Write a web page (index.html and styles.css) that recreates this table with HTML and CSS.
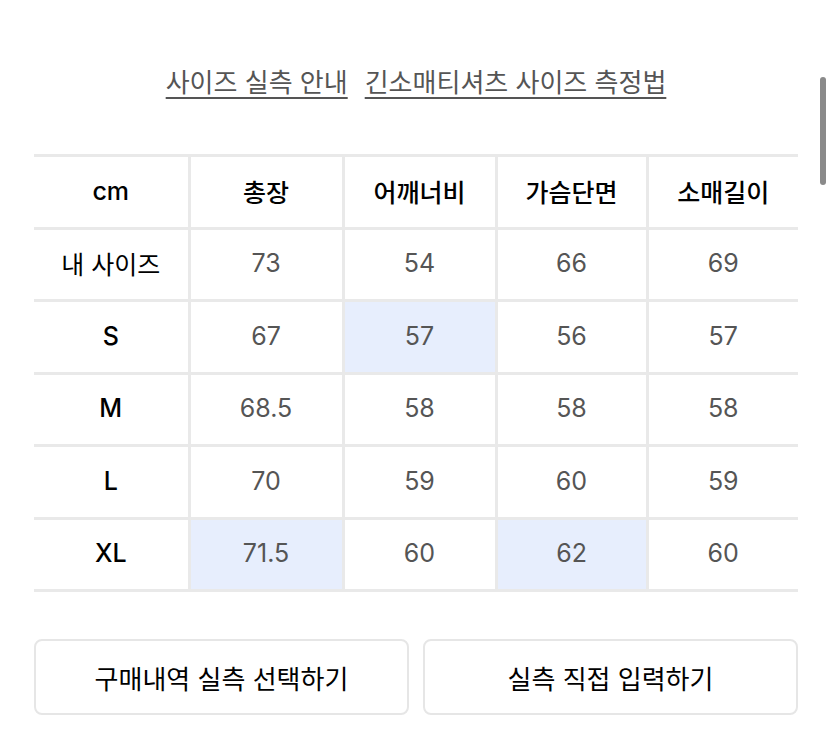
FILE: index.html
```html
<!DOCTYPE html>
<html lang="ko">
<head>
<meta charset="utf-8">
<link rel="stylesheet" href="styles.css">
</head>
<body>
<div class="page">
  <div class="links">
    <a class="link" href="#">사이즈 실측 안내</a>
    <a class="link" href="#">긴소매티셔츠 사이즈 측정법</a>
  </div>
  <table class="size-table">
    <colgroup>
      <col class="c1"><col class="c2"><col class="c3"><col class="c4"><col class="c5">
    </colgroup>
    <thead>
      <tr>
        <th>cm</th><th>총장</th><th>어깨너비</th><th>가슴단면</th><th>소매길이</th>
      </tr>
    </thead>
    <tbody>
      <tr><th>내 사이즈</th><td>73</td><td>54</td><td>66</td><td>69</td></tr>
      <tr><th>S</th><td>67</td><td class="hl">57</td><td>56</td><td>57</td></tr>
      <tr><th>M</th><td>68.5</td><td>58</td><td>58</td><td>58</td></tr>
      <tr><th>L</th><td>70</td><td>59</td><td>60</td><td>59</td></tr>
      <tr><th>XL</th><td class="hl">71.5</td><td>60</td><td class="hl">62</td><td>60</td></tr>
    </tbody>
  </table>
  <div class="buttons">
    <button class="btn">구매내역 실측 선택하기</button>
    <button class="btn">실측 직접 입력하기</button>
  </div>
</div>
<div class="scrollbar"></div>
</body>
</html>
```
FILE: styles.css
```css
html, body {
  margin: 0;
  padding: 0;
  background: #fff;
}
body {
  font-family: "Inter", "Noto Sans CJK KR", sans-serif;
  color: #111;
}
.page {
  padding: 61px 35px 0 34px;
}
.links {
  display: flex;
  justify-content: center;
  gap: 17px;
  height: 40px;
  line-height: 40px;
  margin-bottom: 53px;
}
.link {
  font-family: "Noto Sans CJK KR", sans-serif;
  font-size: 26px;
  color: #555;
  text-decoration: underline;
  text-decoration-thickness: 2px;
  text-underline-offset: 5px;
  text-decoration-color: #555;
}
.size-table {
  width: 100%;
  border-collapse: collapse;
  table-layout: fixed;
}
.c1 { width: 155px; }
.c2 { width: 154px; }
.c3 { width: 153px; }
.c4 { width: 151px; }
.c5 { width: 151px; }
.size-table tr {
  height: 72.5px;
  border-top: 3px solid #e9e9e9;
  border-bottom: 3px solid #e9e9e9;
}
.size-table th,
.size-table td {
  text-align: center;
  vertical-align: middle;
  padding: 0 0 2px 0;
  border-left: 3px solid #e9e9e9;
  font-size: 25px;
}
.size-table th:first-child {
  border-left: none;
}
.size-table thead th {
  font-family: "Noto Sans CJK KR", sans-serif;
  font-weight: 500;
  color: #000;
}
.size-table thead th:first-child {
  font-family: "Inter", "Noto Sans CJK KR", sans-serif;
  font-weight: 500;
}
.size-table tbody th {
  font-weight: 500;
  color: #000;
}
.size-table tbody tr:first-child th {
  font-family: "Noto Sans CJK KR", sans-serif;
  font-weight: 400;
}
.size-table td {
  color: #555;
  font-weight: 400;
}
.size-table td.hl {
  background: #e7eefd;
}
.buttons {
  display: flex;
  gap: 14px;
  margin-top: 47px;
}
.btn {
  flex: 1;
  height: 76px;
  background: #fff;
  border: 2px solid #e6e6e6;
  border-radius: 8px;
  font-family: "Noto Sans CJK KR", sans-serif;
  font-size: 26px;
  font-weight: 400;
  color: #000;
  padding: 0;
}
.scrollbar {
  position: absolute;
  left: 820px;
  top: 77px;
  width: 6px;
  height: 108px;
  border-radius: 3px;
  background: #8a8a8a;
}
```
